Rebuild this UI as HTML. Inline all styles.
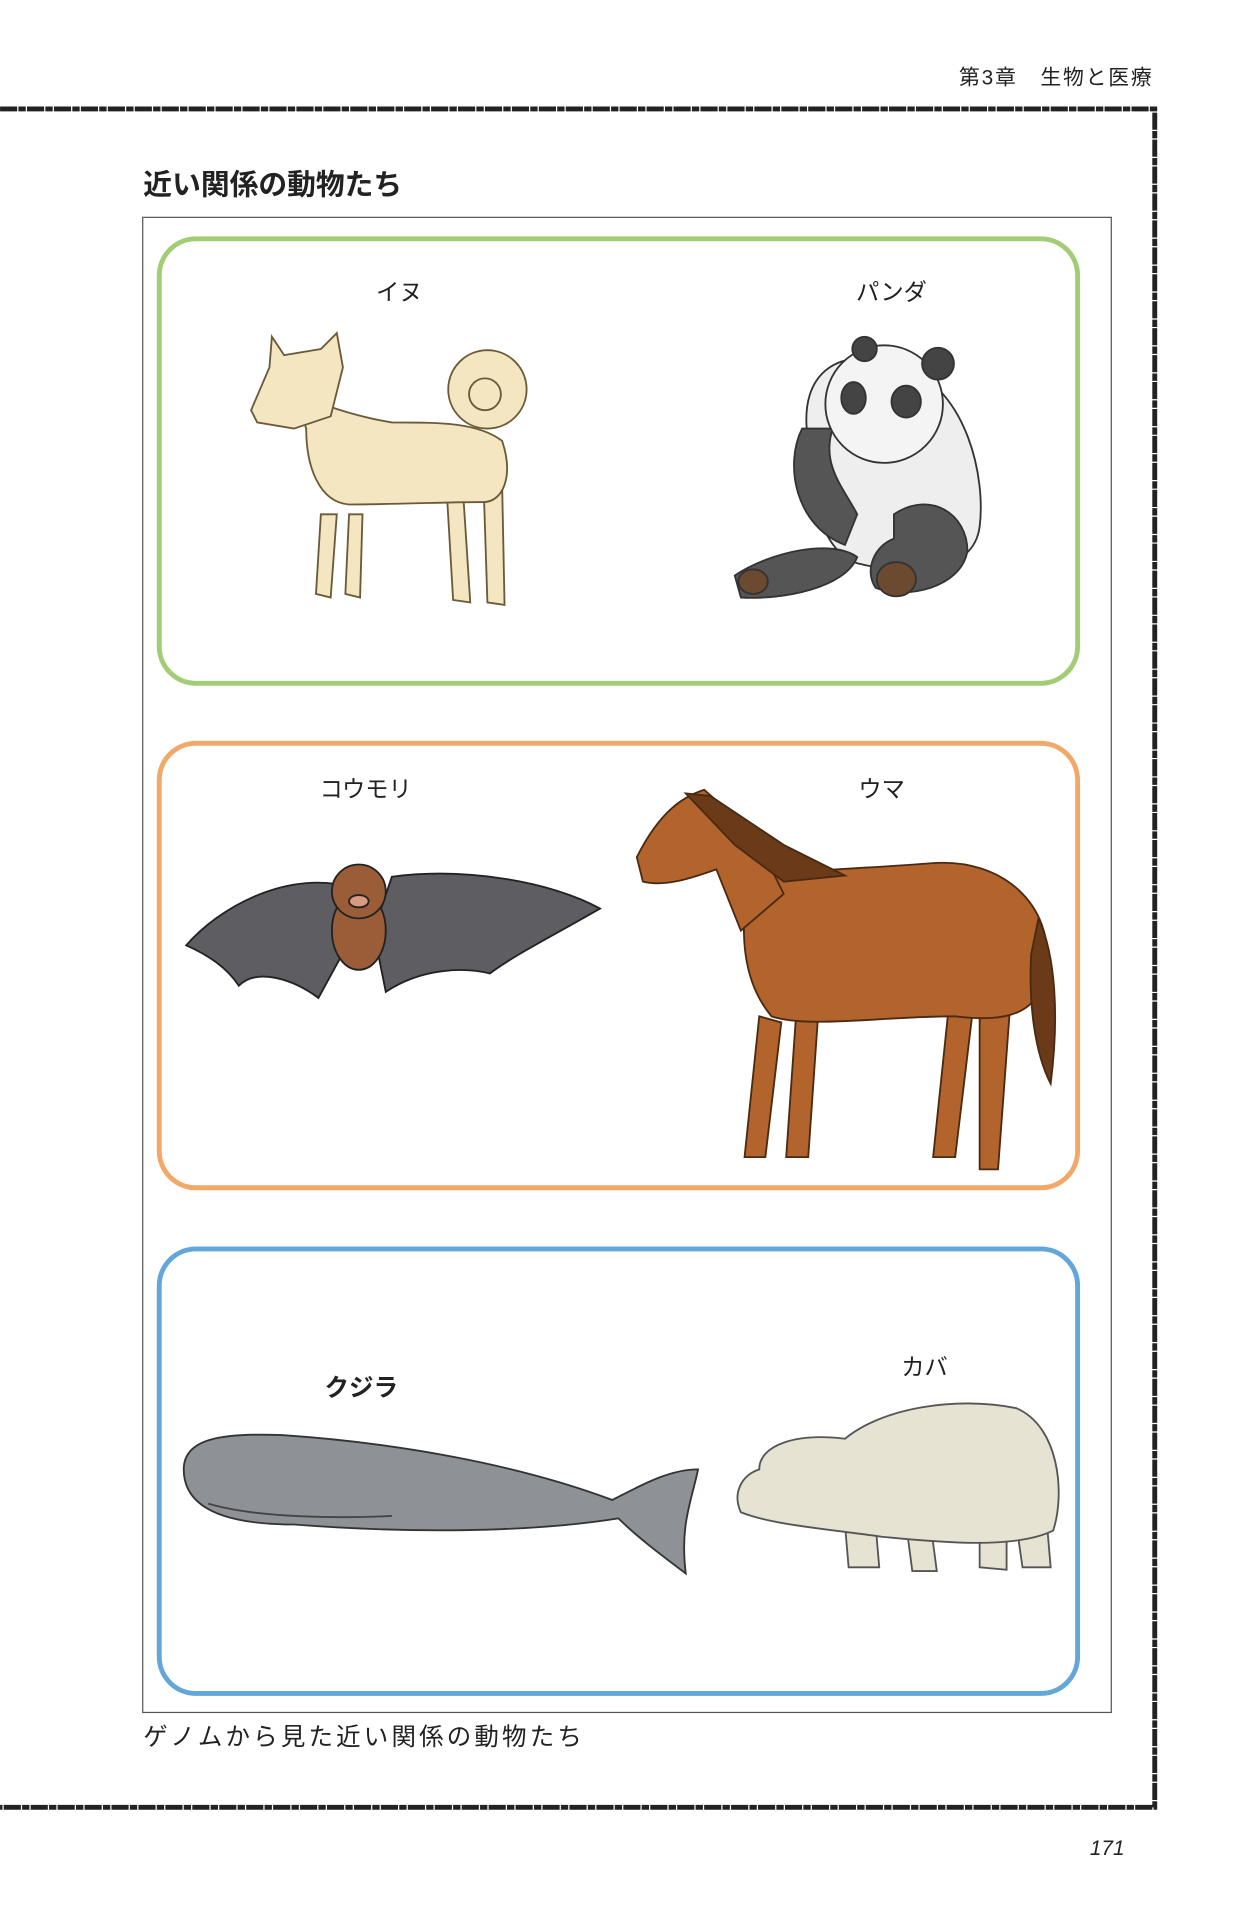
<!DOCTYPE html>
<html><head><meta charset="utf-8"><style>
html,body{margin:0;padding:0;background:#fff;}
svg{display:block;}
text{font-family:"Liberation Sans","Noto Sans CJK JP",sans-serif;fill:#222;}
</style></head><body>
<svg width="1254" height="1920" viewBox="0 0 1024 1568" xmlns="http://www.w3.org/2000/svg">
<rect width="1024" height="1568" fill="#fff"/>
<text x="942" y="69" font-size="17" text-anchor="end" letter-spacing="1.5">第3章　生物と医療</text>
<path d="M0 89 H943 V1476 H0" fill="none" stroke="#222" stroke-width="4" stroke-dasharray="14 1 6 1"/>
<text x="117" y="159" font-size="23.5" font-weight="bold">近い関係の動物たち</text>
<rect x="116.5" y="177.5" width="791" height="1221" fill="none" stroke="#555" stroke-width="1"/>
<rect x="130" y="195" width="750" height="363" rx="30" fill="none" stroke="#a2cd74" stroke-width="4"/>
<rect x="130" y="607" width="750" height="363" rx="30" fill="none" stroke="#f2a868" stroke-width="4"/>
<rect x="130" y="1020" width="750" height="363" rx="30" fill="none" stroke="#63a6da" stroke-width="4"/>
<text x="307" y="245" font-size="19">イヌ</text>
<text x="699" y="245" font-size="19">パンダ</text>
<text x="261" y="651" font-size="19">コウモリ</text>
<text x="701" y="651" font-size="19">ウマ</text>
<text x="265" y="1140" font-size="20" font-weight="bold">クジラ</text>
<text x="736" y="1123" font-size="19">カバ</text>
<text x="117" y="1425" font-size="20" letter-spacing="2.6">ゲノムから見た近い関係の動物たち</text>
<text x="890" y="1515" font-size="17" font-style="italic" font-family="Liberation Serif, serif">171</text>

<g fill="#f4e6c0" stroke="#6b5a3a" stroke-width="1.5">
<path d="M262 420 L258 485 L270 488 L275 420Z M285 420 L282 485 L294 488 L296 420Z M365 405 L370 490 L384 492 L378 400Z M395 400 L398 492 L412 494 L410 395Z"/>
<path d="M240 320 C260 330 290 340 320 345 C360 345 390 345 410 360 C420 390 410 410 395 410 C360 410 320 412 285 412 C260 410 250 380 250 350Z"/>
<path d="M205 335 L220 300 L222 275 L232 290 L262 285 L275 272 L280 300 L270 340 L240 350 L210 345Z"/>
<circle cx="398" cy="318" r="32"/>
<circle cx="396" cy="322" r="13"/>
</g>
<g stroke="#333" stroke-width="1.5">
<path d="M660 360 C650 300 690 280 740 300 C790 320 805 390 800 430 C795 470 740 470 700 460 C670 450 660 400 660 360Z" fill="#eee"/>
<path d="M655 350 C640 380 650 430 690 445 L700 420 C690 400 670 380 680 350Z" fill="#555"/>
<path d="M730 420 C760 400 790 420 790 450 C785 480 740 490 715 480 C705 465 715 445 730 440Z" fill="#555"/>
<path d="M600 470 C630 450 680 440 700 455 C690 480 640 490 605 488Z" fill="#555"/>
<circle cx="722" cy="330" r="48" fill="#f4f4f4"/>
<circle cx="706" cy="285" r="10" fill="#444"/><circle cx="766" cy="297" r="13" fill="#444"/>
<ellipse cx="697" cy="325" rx="10" ry="13" fill="#444"/><ellipse cx="740" cy="328" rx="12" ry="13" fill="#444"/>
<ellipse cx="732" cy="473" rx="16" ry="14" fill="#6b4a30"/><ellipse cx="615" cy="475" rx="12" ry="10" fill="#6b4a30"/>
</g>
<g stroke="#222" stroke-width="1.5">
<path d="M152 772 C180 740 230 715 275 722 L290 760 L260 815 C240 800 210 790 195 805 C185 790 170 780 152 772Z" fill="#5d5d62"/>
<path d="M490 742 C450 720 380 708 320 716 L305 760 L315 810 C345 790 380 790 400 795 C420 780 450 765 490 742Z" fill="#5d5d62"/>
<ellipse cx="293" cy="760" rx="22" ry="32" fill="#9b5c38"/>
<circle cx="293" cy="728" r="22" fill="#9b5c38"/>
<ellipse cx="293" cy="736" rx="8" ry="5" fill="#d89a80"/>
</g>
<g stroke="#4a2a12" stroke-width="1.5" fill="#b3642c">
<path d="M620 830 L608 945 L625 945 L638 835Z M650 830 L642 945 L660 945 L668 830Z M775 820 L762 945 L780 945 L795 820Z M800 820 L800 955 L815 955 L825 820Z"/>
<path d="M610 720 C640 710 700 710 760 705 C820 700 860 740 855 790 C850 830 820 835 780 830 C720 830 660 840 630 830 C605 800 605 760 610 720Z"/>
<path d="M520 700 C540 660 560 650 575 645 L615 680 L640 730 L605 760 L585 710 C570 715 545 725 525 720Z"/>
<path d="M848 750 C862 780 865 830 858 885 C845 860 840 820 842 780Z" fill="#6b3a18"/>
<path d="M560 648 L580 650 L640 690 L690 715 L640 720 L600 690Z" fill="#6b3a18"/>
</g>
<g stroke="#333" stroke-width="1.5">
<path d="M150 1200 C150 1175 180 1170 230 1172 C320 1178 420 1195 500 1225 C520 1215 545 1200 570 1200 C565 1225 555 1245 560 1285 C540 1270 520 1255 505 1240 C430 1252 330 1252 240 1245 C180 1245 150 1230 150 1200Z" fill="#8e9195"/>
<path d="M170 1228 C210 1240 280 1240 320 1238" fill="none" stroke="#444"/>
</g>
<g stroke="#555" stroke-width="1.5" fill="#e6e3d3">
<path d="M690 1245 L693 1280 L718 1280 L715 1245Z M740 1245 L745 1283 L765 1283 L760 1245Z M800 1245 L800 1280 L822 1282 L822 1245Z M830 1245 L835 1280 L858 1280 L855 1245Z"/>
<path d="M620 1200 C620 1180 650 1170 690 1175 C720 1150 780 1140 830 1150 C865 1165 870 1220 860 1250 C830 1265 770 1260 720 1255 C670 1248 630 1245 605 1235 C598 1220 605 1205 620 1200Z"/>
</g>
</svg>
</body></html>
